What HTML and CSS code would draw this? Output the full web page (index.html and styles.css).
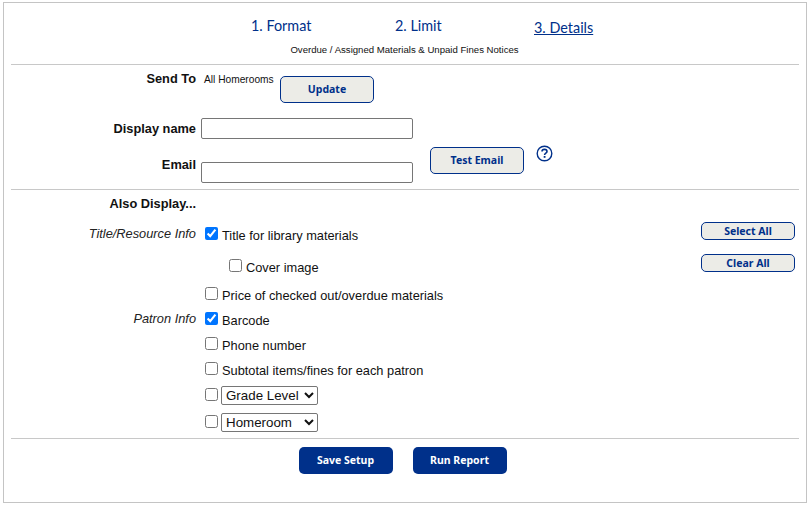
FILE: index.html
```
<!DOCTYPE html>
<html lang="en">
<head>
<meta charset="utf-8">
<title>Notices</title>
<link rel="stylesheet" href="styles.css">
</head>
<body>
<main class="frame">
  <nav class="tabs">
    <a class="tab tab-format">1. Format</a>
    <a class="tab tab-limit">2. Limit</a>
    <a class="tab tab-details">3. Details</a>
  </nav>
  <p class="subtitle">Overdue / Assigned Materials &amp; Unpaid Fines Notices</p>
  <hr class="rule">
  <section class="row row-send">
    <div class="label">Send To</div>
    <div class="send-value">All Homerooms</div>
    <button class="btn btn-light btn-update">Update</button>
  </section>
  <section class="row row-name">
    <label class="label">Display name</label>
    <input class="text-input" type="text">
  </section>
  <section class="row row-email">
    <label class="label email-label">Email</label>
    <input class="text-input email-input" type="text">
    <button class="btn btn-light btn-test">Test Email</button>
    <svg class="help" width="17" height="17" viewBox="0 0 17 17" aria-label="Help">
      <circle cx="8.5" cy="8.5" r="7.3" fill="none" stroke="#00308a" stroke-width="1.4"/>
      <path d="M6 6.6C6 5.2 7.1 4.4 8.5 4.4S11 5.2 11 6.5C11 8.2 8.6 8.2 8.6 10" fill="none" stroke="#00308a" stroke-width="1.6"/>
      <rect x="7.7" y="11" width="1.8" height="1.8" fill="#00308a"/>
    </svg>
  </section>
  <hr class="rule">
  <div class="label also">Also Display...</div>
  <section class="options">
    <div class="option-list">
      <div class="opt h32"><span class="cat">Title/Resource Info</span><label class="choice"><input type="checkbox" checked>Title for library materials</label></div>
      <div class="opt h32"><span class="cat"></span><label class="choice nested"><input type="checkbox">Cover image</label></div>
      <div class="opt h24"><span class="cat"></span><label class="choice"><input type="checkbox">Price of checked out/overdue materials</label></div>
      <div class="opt h26"><span class="cat">Patron Info</span><label class="choice"><input type="checkbox" checked>Barcode</label></div>
      <div class="opt h24"><span class="cat"></span><label class="choice"><input type="checkbox">Phone number</label></div>
      <div class="opt h26"><span class="cat"></span><label class="choice"><input type="checkbox">Subtotal items/fines for each patron</label></div>
      <div class="opt h25"><span class="cat"></span><label class="choice"><input type="checkbox"><select class="pick pick-grade"><option>Grade Level</option></select></label></div>
      <div class="opt h29"><span class="cat"></span><label class="choice"><input type="checkbox"><select class="pick pick-home"><option>Homeroom</option></select></label></div>
    </div>
    <div class="side">
      <button class="btn btn-light btn-small">Select All</button>
      <button class="btn btn-light btn-small">Clear All</button>
    </div>
  </section>
  <hr class="rule">
  <footer class="actions">
    <button class="btn btn-dark">Save Setup</button>
    <button class="btn btn-dark">Run Report</button>
  </footer>
</main>
</body>
</html>
```
FILE: styles.css
```
* { box-sizing: border-box; }
html, body { margin: 0; padding: 0; background: #fff; }
body { font-family: "Liberation Sans", Arial, sans-serif; color: #111; }
.frame {
  width: 804px; height: 501px; margin: 2px 0 0 3px;
  border: 1px solid #c4c4c4; padding: 0 7px;
  display: flex; flex-direction: column;
}
.tabs { height: 39px; display: flex; padding-left: 240px; padding-top: 13px; }
.tab { font-family: Lato, sans-serif; font-size: 14.4px; line-height: 20px; color: #00308a; white-space: nowrap; }
.tab-format { width: 144px; }
.tab-limit { width: 139px; }
.tab-details { text-decoration: underline; margin-top: 2px; }
.subtitle { margin: 0; height: 22px; font-size: 9.6px; line-height: 16px; text-align: center; padding-right: 1px; }
.rule { margin: 0; border: 0; border-top: 1px solid #c8c8c8; height: 1px; flex: none; }
.row { display: flex; position: relative; }
.label { width: 185px; flex: none; text-align: right; font-weight: bold; font-size: 12.8px; }
.row-send { height: 53px; }
.row-send .label { padding-top: 6px; line-height: 16px; }
.send-value { font-size: 10.2px; margin-left: 8px; padding-top: 9px; line-height: 12px; width: 76px; }
.btn-update { margin-top: 11px; }
.row-name { height: 44px; align-items: flex-start; }
.row-name .label { padding-top: 3px; line-height: 16px; }
.text-input { width: 212px; height: 21px; margin: 0 0 0 5px; border: 1px solid #767676; border-radius: 2px; padding: 0; background: #fff; }
.row-email { height: 27px; align-items: flex-start; }
.email-label { margin-top: -5px; line-height: 16px; }
.email-input { margin-top: 0; }
.btn { font-family: "Noto Sans", sans-serif; font-weight: bold; font-size: 10.5px; border-radius: 5px; width: 94px; height: 27px; padding: 0 0 2px; cursor: pointer; }
.btn-light { background: #ecece7; color: #00308a; border: 1px solid #00308a; }
.btn-test { margin-left: 17px; margin-top: -15px; }
.help { margin-left: 12px; margin-top: -17px; flex: none; }
.also { height: 28px; padding-top: 6px; line-height: 16px; flex: none; }
.options { display: flex; height: 220px; flex: none; }
.option-list { flex: 1; padding-top: 1px; }
.opt { display: flex; align-items: center; }
.h24 { height: 24px; } .h25 { height: 25px; } .h26 { height: 26px; } .h29 { height: 29px; } .h32 { height: 32px; }
.cat { width: 185px; flex: none; text-align: right; font-style: italic; font-size: 12.8px; color: #222; margin-top: -3px; }
.choice { display: flex; align-items: center; font-size: 12.8px; margin-left: 5px; }
.choice input { margin: 0 4px 3px 4px; width: 13px; height: 13px; }
.nested { margin-left: 29px; }
.pick { font-family: "Liberation Sans", Arial, sans-serif; font-size: 13.33px; height: 19px; margin-left: -1px; padding: 0; background: #fff; color: #111; border: 1px solid #767676; border-radius: 2px; }
.pick-grade { width: 97px; }
.pick-home { width: 97px; }
.side { width: 94px; flex: none; display: flex; flex-direction: column; gap: 14px; padding-top: 4px; margin-right: 4px; }
.btn-small { height: 18px; border-radius: 5px; padding: 0 0 1px; }
.actions { display: flex; justify-content: center; gap: 20px; padding-top: 8px; padding-right: 5px; }
.btn-dark { background: #00308a; color: #fff; border: 0; }
```
